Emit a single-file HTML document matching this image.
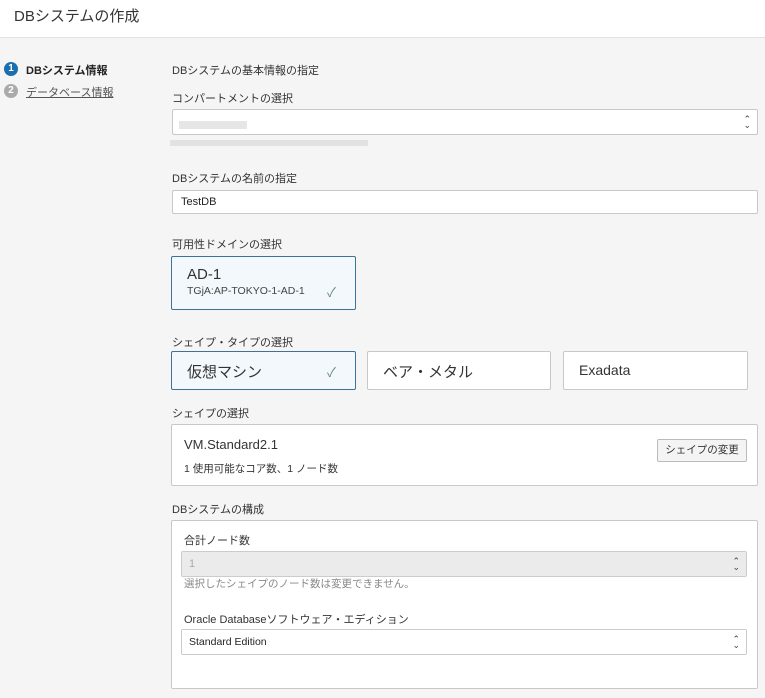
<!DOCTYPE html>
<html><head><meta charset="utf-8"><style>
*{box-sizing:border-box;margin:0;padding:0}
body{width:765px;height:698px;background:#f5f5f5;font-family:"Liberation Sans","Noto Sans CJK JP",sans-serif;color:#333;position:relative;overflow:hidden;font-size:11px}
.a{position:absolute;white-space:nowrap}
.hdr{position:absolute;left:0;top:0;width:765px;height:38px;background:#fff;border-bottom:1px solid #e2e2e2}
.box{position:absolute;background:#fff;border:1px solid #c8c8c8;border-radius:2px}
.sel{border-color:#3f7396;background:#f2f8fc}
.lbl{font-size:11px;color:#333}
.arr{position:absolute;right:6px;top:50%;transform:translateY(-50%);font-size:9px;line-height:6px;color:#444;text-align:center}
.chk{position:absolute;color:#6a8a7a;font-size:13px}
</style></head><body>
<div class="hdr"></div>
<div class="a" style="left:14px;top:5px;font-size:15px;color:#333">DBシステムの作成</div>

<div class="a" style="left:4px;top:62px;width:14px;height:14px;border-radius:50%;background:#1a6fae;color:#fff;font-size:10px;font-weight:bold;text-align:center;line-height:14px">1</div>
<div class="a" style="left:26px;top:62px;font-weight:bold;font-size:11px;color:#222">DBシステム情報</div>
<div class="a" style="left:4px;top:84px;width:14px;height:14px;border-radius:50%;background:#aaa;color:#fff;font-size:10px;font-weight:bold;text-align:center;line-height:14px">2</div>
<div class="a" style="left:26px;top:84px;font-size:11px;color:#555;text-decoration:underline">データベース情報</div>

<div class="a lbl" style="left:172px;top:62px">DBシステムの基本情報の指定</div>
<div class="a lbl" style="left:172px;top:90px">コンパートメントの選択</div>
<div class="box" style="left:172px;top:109px;width:586px;height:26px"><div class="a" style="left:6px;top:11px;width:68px;height:8px;background:#e6e6e6"></div><div class="arr">⌃<br>⌄</div></div>
<div class="a" style="left:170px;top:140px;width:198px;height:6px;background:#e2e2e2"></div>

<div class="a lbl" style="left:172px;top:170px">DBシステムの名前の指定</div>
<div class="box" style="left:172px;top:190px;width:586px;height:24px"><div class="a" style="left:8px;top:5px;font-size:11px;color:#222">TestDB</div></div>

<div class="a lbl" style="left:172px;top:236px">可用性ドメインの選択</div>
<div class="box sel" style="left:171px;top:256px;width:185px;height:54px">
<div class="a" style="left:15px;top:9px;font-size:15px;color:#333">AD-1</div>
<div class="a" style="left:15px;top:28px;font-size:10.5px;color:#444">TGjA:AP-TOKYO-1-AD-1</div>
<div class="chk" style="left:155px;top:25px">✓</div></div>

<div class="a lbl" style="left:172px;top:334px">シェイプ・タイプの選択</div>
<div class="box sel" style="left:171px;top:351px;width:185px;height:39px"><div class="a" style="left:15px;top:9px;font-size:15px;color:#333">仮想マシン</div><div class="chk" style="left:155px;top:10px">✓</div></div>
<div class="box" style="left:367px;top:351px;width:184px;height:39px"><div class="a" style="left:15px;top:9px;font-size:15px;color:#333">ベア・メタル</div></div>
<div class="box" style="left:563px;top:351px;width:185px;height:39px"><div class="a" style="left:15px;top:10px;font-size:14px;color:#333">Exadata</div></div>

<div class="a lbl" style="left:172px;top:405px">シェイプの選択</div>
<div class="box" style="left:171px;top:424px;width:587px;height:62px">
<div class="a" style="left:12px;top:12px;font-size:13px;color:#333">VM.Standard2.1</div>
<div class="a" style="left:12px;top:36px;font-size:10.5px;color:#333">1 使用可能なコア数、1 ノード数</div>
<div class="a" style="left:485px;top:14px;width:90px;height:23px;border:1px solid #bbb;background:#f4f4f4;border-radius:2px;font-size:10.5px;text-align:center;line-height:21px;color:#333">シェイプの変更</div></div>

<div class="a lbl" style="left:172px;top:501px">DBシステムの構成</div>
<div class="box" style="left:171px;top:520px;width:587px;height:169px">
<div class="a lbl" style="left:12px;top:11px">合計ノード数</div>
<div class="a" style="left:9px;top:30px;width:566px;height:26px;background:#ebebeb;border:1px solid #ccc;border-radius:2px"><div class="a" style="left:7px;top:6px;color:#aaa">1</div><div class="arr">⌃<br>⌄</div></div>
<div class="a" style="left:12px;top:55px;font-size:10.5px;color:#888">選択したシェイプのノード数は変更できません。</div>
<div class="a lbl" style="left:12px;top:90px">Oracle Databaseソフトウェア・エディション</div>
<div class="a" style="left:9px;top:108px;width:566px;height:26px;background:#fff;border:1px solid #ccc;border-radius:2px"><div class="a" style="left:7px;top:6px;color:#222;font-size:10.5px">Standard Edition</div><div class="arr">⌃<br>⌄</div></div>
</div>
</body></html>
